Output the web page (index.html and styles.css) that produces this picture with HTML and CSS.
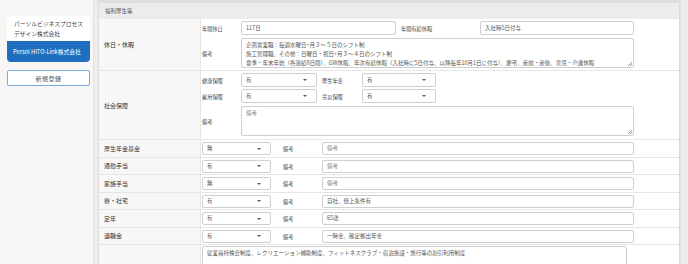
FILE: index.html
```html
<!DOCTYPE html>
<html lang="ja">
<head>
  <meta charset="utf-8">
  <title>福利厚生等</title>
  <link rel="stylesheet" href="styles.css">
</head>
<body>

  <!-- company switcher -->
  <aside class="sidebar">
    <ul class="company-list">
      <li class="company">パーソルビジネスプロセス<br>デザイン株式会社</li>
      <li class="company current">Persol HITO-Link株式会社</li>
    </ul>
    <button class="new-btn">新規登録</button>
  </aside>

  <main class="content">
    <section class="panel">
      <h2 class="panel-title">福利厚生等</h2>

      <!-- 休日・休暇 -->
      <div class="row">
        <div class="row-label">休日・休暇</div>
        <div class="row-body stack">
          <div class="line">
            <span class="sub-label">年間休日</span>
            <div class="field f-155">117日</div>
            <span class="sub-label wide">年間有給休暇</span>
            <div class="field f-154">入社時5日付与</div>
          </div>
          <div class="line">
            <span class="sub-label">備考</span>
            <div class="field area f-393">企画営業職：毎週水曜日+月３～５日のシフト制<br>施工管理職、その他：日曜日・祝日+月３～４日のシフト制<br>夏季・年末年始（各連続8日間）、GW休暇、年次有給休暇（入社時に5日付与、以降毎年10月1日に付与）、慶弔、産前・産後、育児・介護休暇</div>
          </div>
        </div>
      </div>

      <!-- 社会保障 -->
      <div class="row">
        <div class="row-label">社会保障</div>
        <div class="row-body stack s2">
          <div class="line">
            <span class="sub-label">健康保険</span>
            <div class="field select f-76">有</div>
            <span class="sub-label mid">厚生年金</span>
            <div class="field select f-74">有</div>
          </div>
          <div class="line">
            <span class="sub-label">雇用保険</span>
            <div class="field select f-76">有</div>
            <span class="sub-label mid">労災保険</span>
            <div class="field select f-74">有</div>
          </div>
          <div class="line">
            <span class="sub-label">備考</span>
            <div class="field area f-393 placeholder">備考</div>
          </div>
        </div>
      </div>

      <!-- simple rows -->
      <div class="row simple">
        <div class="row-label">厚生年金基金</div>
        <div class="row-body">
          <div class="field select f-69">無</div>
          <span class="note-label">備考</span>
          <div class="field f-312 placeholder">備考</div>
        </div>
      </div>
      <div class="row simple">
        <div class="row-label">通勤手当</div>
        <div class="row-body">
          <div class="field select f-69">有</div>
          <span class="note-label">備考</span>
          <div class="field f-312 placeholder">備考</div>
        </div>
      </div>
      <div class="row simple">
        <div class="row-label">家族手当</div>
        <div class="row-body">
          <div class="field select f-69">無</div>
          <span class="note-label">備考</span>
          <div class="field f-312 placeholder">備考</div>
        </div>
      </div>
      <div class="row simple">
        <div class="row-label">寮・社宅</div>
        <div class="row-body">
          <div class="field select f-69">有</div>
          <span class="note-label">備考</span>
          <div class="field f-312">自社、借上条件有</div>
        </div>
      </div>
      <div class="row simple">
        <div class="row-label">定年</div>
        <div class="row-body">
          <div class="field select f-69">有</div>
          <span class="note-label">備考</span>
          <div class="field f-312">65歳</div>
        </div>
      </div>
      <div class="row simple">
        <div class="row-label">退職金</div>
        <div class="row-body">
          <div class="field select f-69">有</div>
          <span class="note-label">備考</span>
          <div class="field f-312">一時金、確定拠出年金</div>
        </div>
      </div>
      <div class="row last">
        <div class="row-label"></div>
        <div class="row-body">
          <div class="field area f-425">従業員持株会制度、レクリエーション補助制度、フィットネスクラブ・宿泊施設・旅行等の割引利用制度</div>
        </div>
      </div>
    </section>
  </main>

</body>
</html>
```

FILE: styles.css
```css
body {
  margin: 0; height: 264px; overflow: hidden;
  display: flex;
  background: #f7f6f5;
  font-family: "Noto Sans CJK JP", "Noto Sans", sans-serif;
  color: #333;
}

/* sidebar */
.sidebar      { width: 83px; padding: 16px 3px 0 7px; border-right: 1px solid #e3e3e3; flex-shrink: 0; }
.company-list { list-style: none; margin: 0; padding: 0; background: #fff; border-radius: 4px; overflow: hidden; }
.company      { font-size: 5.75px; line-height: 10px; padding: 2.5px 7px; height: 20px; color: #444; }
.company.current { background: #1f6fc1; color: #fff; height: 21px; line-height: 21px; padding: 0 6px; }
.new-btn {
  display: block; width: 83px; height: 16px; margin-top: 8px; padding: 0;
  background: #fff; border: 1px solid #79abdf; border-radius: 2px;
  font: 6px "Noto Sans CJK JP", sans-serif; color: #4b5866; letter-spacing: .5px;
}

/* main panel */
.content { flex: 1; background: #ededed; padding: 0 9px 0 4px; }
.panel   { width: 580px; height: 264px; background: #fff; border-left: 1px solid #dcdcdc; box-shadow: 1px 0 2px rgba(0,0,0,.12); }
.panel-title {
  margin: 0; height: 16px; line-height: 16px; padding-left: 6px;
  border-top: 3px solid #dedede; background: #ececec;
  font-size: 5.5px; font-weight: normal; color: #555;
}

.row       { display: flex; border-bottom: 1px solid #e6e6e6; }
.row-label {
  width: 96px; padding-left: 5px; flex-shrink: 0;
  display: flex; align-items: center;
  background: #f7f7f7; border-right: 1px solid #e6e6e6;
  font-size: 6px; color: #333;
}
.row-body  { display: flex; align-items: center; }
.stack     { flex-direction: column; align-items: stretch; gap: 3px; padding: 2px 0; }
.s2        { gap: 2px; padding-bottom: 3px; }
.s2 .line:last-child { margin-top: 1px; }
.line      { display: flex; align-items: center; }

.sub-label      { width: 40px; padding-left: 1px; box-sizing: border-box; font-size: 5.2px; color: #444; }
.sub-label.wide { width: 84px; padding-left: 5px; }
.sub-label.mid  { width: 45px; padding-left: 5px; }
.note-label     { width: 51px; padding-left: 12px; box-sizing: border-box; font-size: 5.2px; color: #444; }

/* form boxes */
.field {
  position: relative; box-sizing: border-box; height: 14px;
  border: 1px solid #cfcfcf; border-radius: 2px; background: #fff;
  padding: 0 4px; line-height: 12px; font-size: 5.5px; color: #555; white-space: nowrap;
}
.placeholder { color: #888; }
.select::after {
  content: ""; position: absolute; right: 9px; top: 5px;
  border-left: 2px solid transparent; border-right: 2px solid transparent; border-top: 2.5px solid #555;
}
.area { height: 30px; line-height: 9px; padding: 1.5px 4px; white-space: normal; }
.area::after {
  content: ""; position: absolute; right: 1px; bottom: 1px; width: 4px; height: 4px;
  background: linear-gradient(135deg, transparent 45%, #999 45%, #999 55%, transparent 55%, transparent 75%, #999 75%, #999 85%, transparent 85%);
}

.simple .row-body { padding: 2px 0 1.5px 1px; }
.simple .field    { height: 13px; line-height: 11px; }
.simple .select::after { top: 4.5px; }

.last .row-body { padding: 1px 0 0 1px; align-items: flex-start; }

.f-69  { width: 69px; }
.f-74  { width: 74px; }
.f-76  { width: 76px; }
.f-154 { width: 154px; }
.f-155 { width: 155px; }
.f-312 { width: 312px; }
.f-393 { width: 393px; }
.f-425 { width: 425px; }
```
